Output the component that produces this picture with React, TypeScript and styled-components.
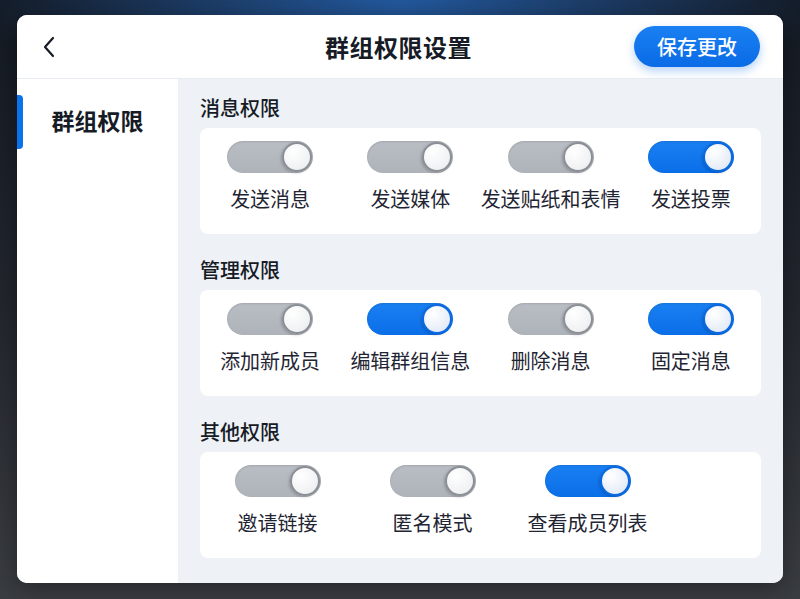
import React, { useState } from 'react';
import styled, { createGlobalStyle } from 'styled-components';

const GlobalStyle = createGlobalStyle`
  html, body {
    margin: 0;
    padding: 0;
    height: 100%;
  }
  body {
    font-family: "Noto Sans CJK SC", "Noto Sans", sans-serif;
    background: #1b1f26;
  }
  #root {
    height: 100%;
  }
`;

const Backdrop = styled.div`
  box-sizing: border-box;
  width: 800px;
  height: 599px;
  padding: 15px 17px 16px 17px;
  background:
    radial-gradient(ellipse 420px 120px at 50% 0%, rgba(40, 110, 200, 0.75), rgba(20, 50, 100, 0) 100%),
    linear-gradient(180deg, #141a24 0%, #22262d 50%, #3a3d42 100%);
`;

const Window = styled.div`
  height: 100%;
  border-radius: 10px;
  overflow: hidden;
  background: #ffffff;
  display: flex;
  flex-direction: column;
  box-shadow: 0 6px 24px rgba(0, 0, 0, 0.35);
`;

const Header = styled.header`
  height: 63px;
  flex: none;
  display: grid;
  grid-template-columns: 1fr auto 1fr;
  align-items: center;
  padding: 0 23px 0 20px;
  border-bottom: 1px solid #e8ebf0;
  background: #ffffff;
`;

const BackButton = styled.button`
  justify-self: start;
  background: none;
  border: 0;
  padding: 0;
  width: 22px;
  height: 22px;
  display: flex;
  align-items: center;
  justify-content: center;
  margin-left: 1px;
  cursor: pointer;
`;

const Title = styled.h1`
  margin: 0;
  font-size: 24px;
  font-weight: 700;
  color: #161b26;
  letter-spacing: 0.5px;
`;

const SaveButton = styled.button`
  justify-self: end;
  height: 41px;
  padding: 0 23px;
  border: 0;
  border-radius: 21px;
  background: linear-gradient(180deg, #1a80f2 0%, #0a6be6 100%);
  color: #ffffff;
  font-family: inherit;
  font-size: 20px;
  font-weight: 500;
  box-shadow: 0 4px 10px rgba(10, 107, 230, 0.3);
  cursor: pointer;
`;

const Body = styled.div`
  flex: 1;
  display: flex;
  min-height: 0;
`;

const Sidebar = styled.nav`
  width: 161px;
  flex: none;
  background: #ffffff;
  padding-top: 16px;
`;

const SideItem = styled.div<{ $active?: boolean }>`
  position: relative;
  height: 54px;
  display: flex;
  align-items: center;
  justify-content: center;
  padding-bottom: 5px;
  box-sizing: border-box;
  font-size: 23px;
  font-weight: 700;
  color: #161b26;
  &::before {
    content: '';
    display: ${(p) => (p.$active ? 'block' : 'none')};
    position: absolute;
    left: 0;
    top: 0;
    bottom: 0;
    width: 6px;
    border-radius: 0 4px 4px 0;
    background: #0a72ea;
  }
`;

const Content = styled.main`
  flex: 1;
  background: #eef1f5;
  padding: 15px 22px 0 22px;
  display: flex;
  flex-direction: column;
  gap: 22px;
`;

const Section = styled.section`
  display: flex;
  flex-direction: column;
  gap: 6px;
`;

const SectionTitle = styled.h2`
  margin: 0;
  font-size: 20px;
  line-height: 28px;
  font-weight: 500;
  color: #161b26;
`;

const Card = styled.div<{ $cols: string }>`
  background: #ffffff;
  border-radius: 8px;
  height: 106px;
  box-sizing: border-box;
  padding-top: 13px;
  display: grid;
  grid-template-columns: ${(p) => p.$cols};
  align-items: start;
`;

const Item = styled.div`
  display: flex;
  flex-direction: column;
  align-items: center;
  gap: 12px;
`;

const Track = styled.button<{ $on: boolean }>`
  position: relative;
  width: 86px;
  height: 32px;
  border: 0;
  padding: 0;
  border-radius: 16px;
  background: ${(p) =>
    p.$on
      ? 'linear-gradient(180deg, #1a80f2 0%, #0a6ee8 100%)'
      : 'linear-gradient(180deg, #b9bdc4 0%, #aeb2b9 100%)'};
  box-shadow: inset 0 1px 2px rgba(0, 0, 0, 0.12);
  cursor: pointer;
`;

const Knob = styled.span<{ $on: boolean }>`
  position: absolute;
  top: 1px;
  right: 1px;
  width: 30px;
  height: 30px;
  box-sizing: border-box;
  border-radius: 50%;
  border: 2px solid ${(p) => (p.$on ? '#0a68e0' : '#8a8e95')};
  background: ${(p) =>
    p.$on
      ? 'radial-gradient(circle at 35% 30%, #ffffff 0%, #e6edf8 70%, #d6e2f4 100%)'
      : 'radial-gradient(circle at 35% 30%, #ffffff 0%, #f0f1f3 70%, #e2e4e8 100%)'};
  box-shadow: -1px 1px 3px rgba(0, 0, 0, 0.2);
`;

const Label = styled.span`
  font-size: 20px;
  line-height: 28px;
  color: #1f2533;
  white-space: nowrap;
`;

type Perm = { label: string; on: boolean };

const sections: { title: string; cols: string; items: Perm[] }[] = [
  {
    title: '消息权限',
    cols: 'repeat(4, 1fr)',
    items: [
      { label: '发送消息', on: false },
      { label: '发送媒体', on: false },
      { label: '发送贴纸和表情', on: false },
      { label: '发送投票', on: true },
    ],
  },
  {
    title: '管理权限',
    cols: 'repeat(4, 1fr)',
    items: [
      { label: '添加新成员', on: false },
      { label: '编辑群组信息', on: true },
      { label: '删除消息', on: false },
      { label: '固定消息', on: true },
    ],
  },
  {
    title: '其他权限',
    cols: 'repeat(3, 155px)',
    items: [
      { label: '邀请链接', on: false },
      { label: '匿名模式', on: false },
      { label: '查看成员列表', on: true },
    ],
  },
];

function Toggle({ initial }: { initial: boolean }) {
  const [on, setOn] = useState(initial);
  return (
    <Track $on={on} onClick={() => setOn(!on)} aria-pressed={on}>
      <Knob $on={on} />
    </Track>
  );
}

export default function App() {
  return (
    <>
      <GlobalStyle />
      <Backdrop>
        <Window>
          <Header>
            <BackButton aria-label="返回">
              <svg width="14" height="22" viewBox="0 0 14 22" fill="none">
                <path d="M11 2 L3 11 L11 20" stroke="#161b26" strokeWidth="2.2" strokeLinecap="round" strokeLinejoin="round" />
              </svg>
            </BackButton>
            <Title>群组权限设置</Title>
            <SaveButton>保存更改</SaveButton>
          </Header>
          <Body>
            <Sidebar>
              <SideItem $active>群组权限</SideItem>
            </Sidebar>
            <Content>
              {sections.map((s) => (
                <Section key={s.title}>
                  <SectionTitle>{s.title}</SectionTitle>
                  <Card $cols={s.cols}>
                    {s.items.map((it) => (
                      <Item key={it.label}>
                        <Toggle initial={it.on} />
                        <Label>{it.label}</Label>
                      </Item>
                    ))}
                  </Card>
                </Section>
              ))}
            </Content>
          </Body>
        </Window>
      </Backdrop>
    </>
  );
}
